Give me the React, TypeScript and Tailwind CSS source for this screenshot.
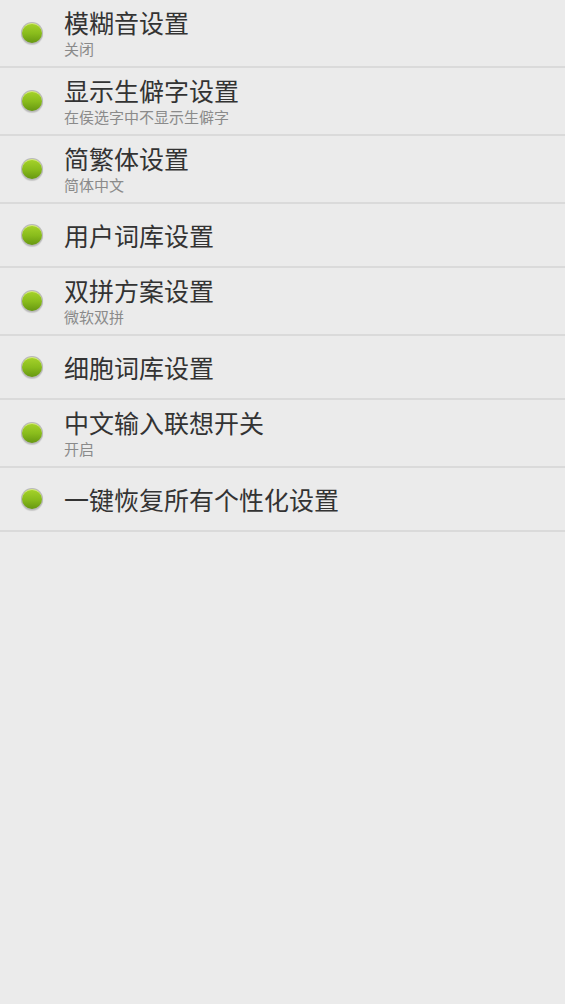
const items: { title: string; sub?: string }[] = [
  { title: "模糊音设置", sub: "关闭" },
  { title: "显示生僻字设置", sub: "在侯选字中不显示生僻字" },
  { title: "简繁体设置", sub: "简体中文" },
  { title: "用户词库设置" },
  { title: "双拼方案设置", sub: "微软双拼" },
  { title: "细胞词库设置" },
  { title: "中文输入联想开关", sub: "开启" },
  { title: "一键恢复所有个性化设置" },
]

function Dot() {
  return (
    <div className="w-[22px] h-[22px] rounded-full bg-[#b9b9b9] p-px shadow-[0_1px_1px_rgba(0,0,0,0.15)]">
      <div className="w-full h-full rounded-full bg-gradient-to-b from-[#a4d12a] via-[#89bc1c] to-[#679811] border-t border-[#d6ec7a]" />
    </div>
  )
}

export default function App() {
  return (
    <div
      className="w-[565px] h-[1004px] bg-[#ebebeb]"
      style={{ fontFamily: '"Noto Sans CJK SC", "Noto Sans", sans-serif' }}
    >
      {items.map((it) => (
        <div
          key={it.title}
          className={`flex items-center border-b-2 border-[#dadada] ${it.sub ? "h-[68px]" : "h-[64px]"}`}
        >
          <div className="w-[64px] flex justify-center">
            <div className="ml-[-1px]">
              <Dot />
            </div>
          </div>
          <div className="flex flex-col">
            <span className="text-[25px] leading-[32px] text-[#333333]">{it.title}</span>
            {it.sub && (
              <span className="text-[15px] leading-[22px] text-[#8a8a8a]">{it.sub}</span>
            )}
          </div>
        </div>
      ))}
    </div>
  )
}
